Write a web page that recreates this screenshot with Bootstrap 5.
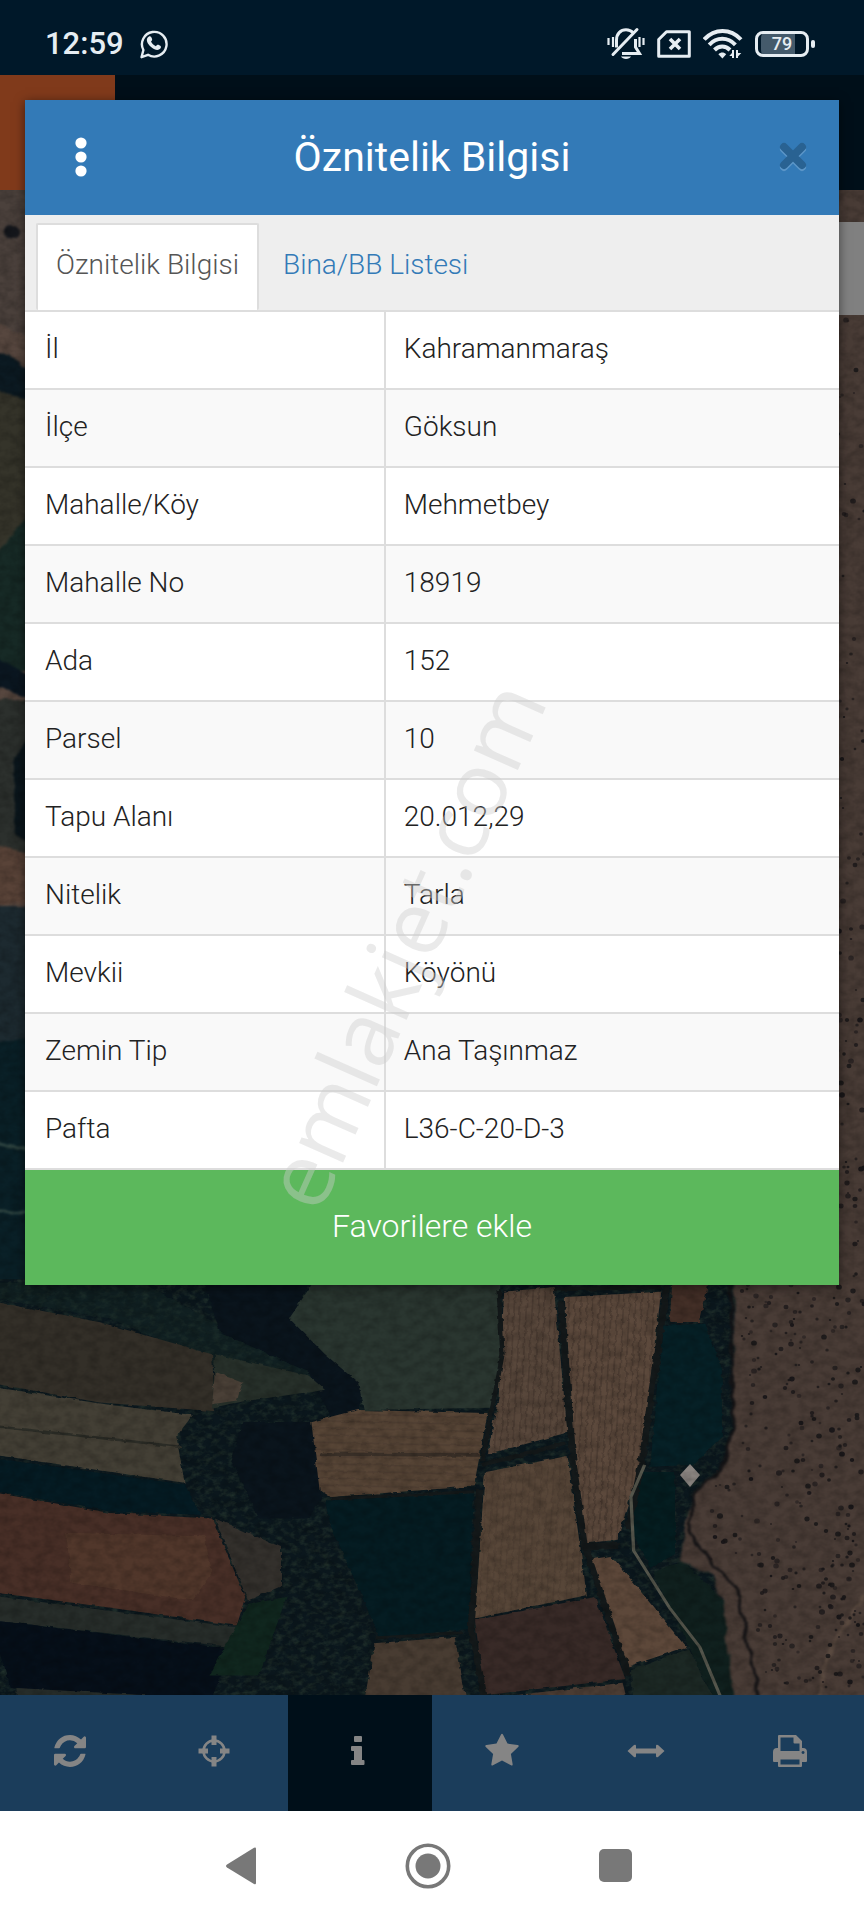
<!DOCTYPE html>
<html lang="tr">
<head>
<meta charset="utf-8">
<meta name="viewport" content="width=device-width, initial-scale=1">
<title>Öznitelik Bilgisi</title>
<link href="https://cdn.jsdelivr.net/npm/bootstrap@5.3.0/dist/css/bootstrap.min.css" rel="stylesheet">
<style>
  body { font-family: Roboto, "Noto Sans", sans-serif; font-weight: 300; color: #222; }
  button { font-family: inherit; }
  .status-bar { height: 75px; padding: 12px 55px 0 45px; background: #001829; color: #e6edf2; }
  .clock { font-size: 31px; line-height: 40px; font-weight: 500; }
  .status-icons { gap: 12px; }
  .battery { width: 54px; height: 26px; border: 3px solid #e6edf2; border-radius: 8px; position: relative; font-size: 18px; line-height: 20px; font-weight: 500;
    background: linear-gradient(90deg, #445a6b 80%, transparent 80%) content-box; padding: 0 3px; }
  .battery::after { content: ""; position: absolute; right: -9px; top: 6px; width: 4px; height: 8px; border-radius: 2px; background: #e6edf2; }
  .app-bar { height: 115px; background: #000f19; }
  .app-logo { width: 115px; background: #803a1b; }
  .map-area { background: #57473f; overflow: hidden; }
  .map-control { width: 60px; height: 93px; margin-top: 32px; background: #808080; }
  .tool-bar { background: #1b3d5b; }
  .tool-bar button { flex: 1 1 0; height: 116px; border: 0; background: none; color: #858585; padding: 0 4px 4px 0; }
  .tool-bar button.active { background: #000f19; }
  .system-nav { height: 109px; padding-right: 8px; background: #fff; }
  .system-nav button { width: 187px; border: 0; background: none; color: #787878; padding: 0; }
  .info-dialog { top: 100px; left: 25px; right: 25px; box-shadow: 0 2px 10px rgba(0,0,0,.5); background: #fff; }
  .dialog-head { height: 115px; padding: 0 32px 2px 42px; background: #337ab7; color: #fff; }
  .dialog-head button { border: 0; background: none; padding: 0; width: 28px; line-height: 0; }
  .dialog-head h1 { font-size: 41px; line-height: 48px; font-weight: 400; padding-right: 10px; }
  .info-tabs { background: #eee; padding: 8px 11px 0; border-bottom: 2px solid #ddd; flex-wrap: nowrap; }
  .info-tabs .nav-link { font-size: 28px; line-height: 40px; padding: 20px 18px 25px; border: 2px solid transparent; border-bottom: 0; border-radius: 2px; color: #337ab7; margin: 0; }
  .info-tabs .nav-item + .nav-item { margin-left: 4px; }
  .info-tabs .nav-link.active { color: #555; background: #fff; border-color: #ddd; }
  .info-table { font-size: 28px; line-height: 40px; border-color: #ddd; color: #222; table-layout: fixed; }
  .info-table th, .info-table td { font-weight: 300; padding: 17px 18px 19px; border-width: 0 0 2px; color: #222; }
  .info-table th { width: 44.2%; border-right: 2px solid #ddd; padding-left: 20px; }
  .info-table tr:nth-child(even) > * { background: #f9f9f9; }
  .favorite { height: 115px; border: 0; background: #5cb85c; color: #fff; font-size: 32px; line-height: 40px; font-weight: 300; padding-bottom: 4px; }
  .watermark { left: 377px; top: 844px; font: 400 90px/100px "Open Sans", sans-serif; color: rgba(205,205,205,.42); white-space: nowrap;
    transform: translate(-50%, -50%) rotate(-66deg); pointer-events: none; }
</style>
</head>
<body>
<div class="position-relative min-vh-100 d-flex flex-column">
  <header class="status-bar d-flex align-items-center">
    <span class="clock">12:59</span>
    <svg class="ms-3" width="28" height="30" viewBox="0 0 28 30" fill="none" stroke="#e6edf2" stroke-width="2.4" aria-hidden="true">
      <path d="M1.5 28.2l1.9-7.2A12.3 12.3 0 1 1 8 25.8Z" stroke-linejoin="round"/>
      <path d="M8.6 7.7c1.5-1 2.6-.3 3.2 1.5.6 1.600.5 2-.8 3.300 1 2.100 2.600 3.700 4.900 4.700 1.400-1.500 1.900-1.700 3.400-.9 1.700.9 2 1.300 1.500 2.500-1 2.200-3.700 2.700-6.300 1.500C10.600 18.400 7.500 15 6.900 11.800 6.600 9.900 7.300 8.600 8.600 7.700Z" fill="#e6edf2" stroke="none"/>
    </svg>
    <div class="status-icons d-flex align-items-center ms-auto">
    <svg width="38" height="34" viewBox="0 0 38 34" fill="none" stroke="#e6edf2" aria-hidden="true">
      <path d="M9.500 20.500V13c0-6 4-10.200 9.500-10.200 3 0 5.500 1.100 7.200 3M28.500 12v8l4 6.500H15" stroke-width="3"/>
      <path d="M30 2.500L6 27.500" stroke-width="3" stroke-linecap="round"/>
      <path d="M14 29.500h10c-1.500 3.300-8.500 3.300-10 0Z" fill="#e6edf2" stroke="none"/>
      <path d="M1.500 11v7M6 10v10M32.500 10v10M36.500 11v7" stroke-width="2.200"/>
    </svg>
    <svg width="34" height="28" viewBox="0 0 34 28" fill="none" stroke="#e6edf2" stroke-width="3" stroke-linejoin="round" aria-hidden="true">
      <path d="M9.500 1.700H32.300V26.300H1.700V9.500Z"/><path d="M13 9l10 10M23 9L13 19" stroke-width="3.600"/>
    </svg>
    <svg width="40" height="30" viewBox="0 0 40 30" fill="none" stroke="#e6edf2" stroke-width="4" aria-hidden="true">
      <path d="M1.200 10.500C11.500-.8 27.500-.8 38 10.500M6.200 15.800c7.500-8 18.500-8 26.200 0M11.500 21c4.500-4.600 11-4.600 15.500 0"/>
      <path d="M19.400 29.500l-4-4.300c2.200-2.200 5.600-2.200 7.800 0Z" fill="#e6edf2" stroke="none"/>
      <path d="M30.300 28.500v-6l-4 4.500h4M34 21v7.500l4.300-4.500H34" fill="#e6edf2" stroke="none"/><path d="M30 21v8M34 21v8" stroke-width="2"/>
    </svg>
    <div class="battery text-center">79</div>
    </div>
  </header>
  <div class="app-bar d-flex"><div class="app-logo"></div></div>

  <main class="map-area position-relative flex-grow-1 d-flex">
    <svg class="position-absolute top-0 start-0 w-100 h-100" viewBox="0 190 864 1505" preserveAspectRatio="none" aria-hidden="true">
      <defs>
        <pattern id="furrowV" width="11" height="40" patternUnits="userSpaceOnUse" patternTransform="rotate(2)"><path d="M3 0V40" stroke="#3d2f28" stroke-opacity=".45" stroke-width="3"/></pattern>
        <pattern id="furrowH" width="40" height="20" patternUnits="userSpaceOnUse" patternTransform="rotate(2)"><path d="M0 6H40" stroke="#3d2f28" stroke-opacity=".3" stroke-width="5"/></pattern>
        <filter id="grain" x="0" y="0" width="100%" height="100%"><feTurbulence type="fractalNoise" baseFrequency=".09 .12" numOctaves="3" seed="5"/><feColorMatrix values="0 0 0 0 0  0 0 0 0 0  0 0 0 0 0  1.500 0 0 0 -.5"/></filter>
        <filter id="leaves" x="0" y="0" width="100%" height="100%" color-interpolation-filters="sRGB"><feTurbulence type="fractalNoise" baseFrequency=".07" numOctaves="3" seed="9"/><feColorMatrix values="0 0 0 0 .13  0 0 0 0 .19  0 0 0 0 .17  2.200 0 0 0 -.950" result="n"/><feComposite in="n" in2="SourceGraphic" operator="in" result="m"/><feMerge><feMergeNode in="SourceGraphic"/><feMergeNode in="m"/></feMerge></filter>
        <filter id="rough" x="-5%" y="-5%" width="110%" height="110%" color-interpolation-filters="sRGB"><feTurbulence type="fractalNoise" baseFrequency=".06" numOctaves="2" seed="2"/><feDisplacementMap in="SourceGraphic" scale="9" xChannelSelector="R" yChannelSelector="G" result="d"/><feGaussianBlur in="d" stdDeviation=".8"/></filter>
      </defs>
      <!-- west edge strip -->
      <g filter="url(#rough)">
        <path fill="#4b413c" d="M-9 180H40V345L-9 320Z"/><circle cx="13" cy="232" r="7" fill="#15171c"/>
        <path fill="#0c1a22" d="M-9 350L40 375V405L-9 390Z"/>
        <path fill="#35342a" d="M-9 390L40 402V520L-9 560Z"/>
        <path fill="#172a26" d="M-9 560L40 500V670H-9Z"/>
        <path fill="#0b1721" d="M-9 655L40 680V700L-9 685Z"/>
        <path fill="#2c302d" d="M-9 700H40V860H-9Z"/><path fill="#0b161c" d="M14 760L40 720V850L14 835Z"/>
        <path fill="#594338" d="M-9 845L40 855V900L-9 905Z"/>
        <path fill="#1d2a30" d="M-9 905H40V1045H-9Z"/><path fill="#0a2027" d="M-9 1040H40V1300H-9Z"/>
        <path d="M-9 1140L40 1155M-9 1210L40 1215" stroke="#304541" stroke-width="3"/>
      </g>
      <!-- fields south of the village, drawn on their own grid -->
      <g transform="translate(0 1140) scale(.551 .357)">
        <path fill="#0b171d" d="M0 390H1340V1568H0Z" filter="url(#leaves)"/>
        <g filter="url(#rough)">
        <path fill="#152826" d="M-20 400H260L400 520L560 640L600 700L380 620L200 500L-20 440Z" fill-opacity=".5"/>
        <path fill="#0a141c" d="M370 400H560L530 500L600 600L660 680L650 760L600 780L560 650L400 540Z"/>
        <path fill="#332f28" d="M-20 450L180 510L385 600L390 760L180 735L-20 680Z"/>
        <path fill="#27302a" d="M390 600L560 660L590 700L450 730L385 750Z"/><path fill="#4a4037" d="M390 650L440 680L430 730L385 740Z"/>
        <path fill="#433f35" d="M-20 690L190 740L350 770L320 830L335 960L-20 880Z"/>
        <path d="M-20 800L330 860" stroke="#2b2c26" stroke-width="7"/>
        <path fill="#051b23" d="M-20 890L335 965L365 1050L200 1040L-20 980Z"/>
        <path fill="#0a141c" d="M440 790L565 790L585 1000L560 1060L470 1060L420 900Z"/>
        <path fill="#482f27" d="M-20 985L200 1045L385 1060L445 1280L430 1360L200 1310L-20 1265Z"/>
        <path fill="#5a402f" fill-opacity=".5" d="M120 1100L370 1110L385 1210L350 1290L130 1240Z"/>
        <path fill="#272d2a" d="M-20 1275L430 1365L420 1420L-20 1345Z"/>
        <path fill="#060f19" d="M-20 1345L420 1425L380 1580H340L20 1535Z"/>
        <path fill="#33302c" d="M390 1060L510 1140L510 1250L450 1290Z"/>
        <path fill="#10261e" d="M450 1300L520 1280L470 1500L380 1500Z"/>
        <path fill="#262c29" d="M30 1535L350 1562V1580H30Z"/>
        <path fill="#2a3630" d="M570 395H905L915 600L890 750L660 756L650 680L590 600L525 500Z"/>
        <path fill="#574536" d="M565 790L650 756L885 765L860 970L600 1000L580 980Z"/><path fill="url(#furrowH)" d="M565 790L650 756L885 765L860 970L600 1000L580 980Z"/>
        <path d="M580 880L870 882" stroke="#392f27" stroke-width="10"/>
        <path fill="#051c22" d="M590 1010L860 990L850 1370L690 1395L600 1080Z"/>
        <path fill="#483c32" d="M680 1410L825 1392L848 1580H660Z"/>
        <path fill="#58473b" d="M915 425L1005 412L1030 820L885 880L905 720Z"/><path fill="url(#furrowV)" d="M915 425L1005 412L1030 820L885 880L905 720Z"/>
        <path fill="#5c493c" d="M1025 440L1200 425L1160 920L1120 1120L1060 1130L1040 800Z"/><path fill="url(#furrowV)" d="M1025 440L1200 425L1160 920L1120 1120L1060 1130L1040 800Z"/>
        <path fill="#574638" d="M880 930L1030 885L1065 1275L862 1340Z"/><path fill="url(#furrowV)" opacity=".5" d="M880 930L1030 885L1065 1275L862 1340Z"/>
        <path fill="#382a27" d="M862 1345L1080 1280L1135 1510L880 1555Z"/><path fill="#4b3c33" d="M880 1565L1130 1520L1140 1580Z"/>
        <path fill="#5d483a" d="M1070 1175L1110 1165L1245 1420L1140 1475Z"/>
        <path fill="#1c2824" d="M1145 1485L1250 1425L1300 1580H1150Z"/>
        <path fill="#432f27" d="M1220 405H1285L1270 510L1215 510Z"/>
        <path fill="#062026" d="M1205 520L1280 515L1310 640L1310 830L1260 910L1180 915Z"/>
        <path fill="#051d20" d="M1160 930L1225 930L1225 1160L1180 1200L1145 1090Z"/>
        <path fill="#10201e" d="M1185 1210L1240 1180L1340 1330L1350 1580H1300Z"/>
        </g>
        <g fill="none" stroke="#14191a" stroke-width="8" filter="url(#rough)">
          <path d="M1018 450L1040 900L1060 1130L1140 1500M875 910L1025 850" stroke-width="12"/><path d="M1060 1140L1125 1135" stroke-width="20"/>
          <path d="M870 980L855 1370L880 1568" stroke-width="12"/><path d="M905 420L912 600L875 900M600 1005L860 985M680 1395L840 1380"/><path d="M1005 418L1200 412M1210 410L1165 900L1140 1090" stroke-width="12"/>
        </g>
        <path fill="none" stroke="#55564c" stroke-width="6" stroke-linejoin="round" d="M1170 910L1145 1000L1150 1150L1215 1310L1270 1420L1310 1568"/>
      </g>
      <!-- scrubland on the east side -->
      <g filter="url(#rough)">
        <path fill="#493c36" d="M735 1280L733 1430L720 1470L692 1495L680 1560L712 1575L722 1600L735 1705H880V180H835V1280Z"/>
        <path fill="none" stroke="#151416" stroke-width="3" d="M731 1285L733 1430L720 1470L692 1495L691 1535L712 1565L738 1590L760 1705"/>
        <path fill="none" stroke="#5a4a40" stroke-width="3" d="M870 1590L835 1640L815 1705"/>
      </g>
      <path fill="#8a8480" d="M680 1475L690 1464L700 1475L690 1487Z"/>
      <g id="shrubs" fill="#1b181a"></g>
      <rect x="0" y="190" width="864" height="1505" filter="url(#grain)" opacity=".25"/>
    </svg>
    <div class="map-control position-relative ms-auto"></div>
  </main>

  <nav class="tool-bar d-flex" aria-label="Harita araçları">
    <button type="button" aria-label="Yenile"><svg width="32" height="32" viewBox="0 0 1536 1536" fill="currentColor"><path d="M1511 928q0 5-1 7-64 268-268 434.500t-478 166.500q-146 0-282.500-55t-243.500-157l-129 129q-19 19-45 19t-45-19-19-45v-448q0-26 19-45t45-19h448q26 0 45 19t19 45-19 45l-137 137q71 66 161 102t187 36q134 0 250-65t186-179q11-17 53-117 8-23 30-23h192q13 0 22.500 9.500t9.500 22.500zm25-800v448q0 26-19 45t-45 19h-448q-26 0-45-19t-19-45 19-45l138-138q-148-137-349-137-134 0-250 65t-186 179q-11 17-53 117-8 23-30 23h-199q-13 0-22.500-9.500t-9.500-22.500v-7q65-268 270-434.500t480-166.500q146 0 284 55.500t245 156.500l130-129q19-19 45-19t45 19 19 45z"/></svg></button>
    <button type="button" aria-label="Konum"><svg width="32" height="32" viewBox="0 0 32 32" fill="none" stroke="currentColor"><circle cx="16" cy="16" r="10.500" stroke-width="2.600"/><path d="M16 .5v9.500M16 22v9.500M.5 16H10M22 16h9.500" stroke-width="5"/></svg></button>
    <button type="button" class="active" aria-label="Bilgi"><svg width="32" height="32" viewBox="0 0 32 32" fill="currentColor"><rect x="12" y="1" width="8" height="6" rx="1"/><path d="M10 11h9a1 1 0 0 1 1 1v13h1.500a1 1 0 0 1 1 1v3a1 1 0 0 1-1 1H10a1 1 0 0 1-1-1v-3a1 1 0 0 1 1-1h2v-9h-2a1 1 0 0 1-1-1v-3a1 1 0 0 1 1-1Z"/></svg></button>
    <button type="button" aria-label="Favoriler"><svg width="36" height="36" viewBox="0 0 1792 1792" fill="currentColor"><path d="M1728 647q0 22-26 48l-363 354 86 500q1 7 1 20 0 21-10.500 35.500t-30.500 14.500q-19 0-40-12l-449-236-449 236q-22 12-40 12-21 0-31.500-14.500t-10.500-35.500q0-6 2-20l86-500-364-354q-25-27-25-48 0-37 56-46l502-73 225-455q19-41 49-41t49 41l225 455 502 73q56 9 56 46z"/></svg></button>
    <button type="button" aria-label="Ölçüm"><svg width="38" height="32" viewBox="0 0 38 32" fill="currentColor"><path d="M.5 16L7 10q2-1 2 1v2.500h20V11q0-2 2-1l6.500 6-6.500 6q-2 1-2-1v-2.500H9V21q0 2-2 1Z"/></svg></button>
    <button type="button" aria-label="Yazdır"><svg width="36" height="32" viewBox="0 0 36 32"><path fill="currentColor" fill-rule="evenodd" d="M7 0H24L30 6V13h1a4 4 0 0 1 4 4v9a1 1 0 0 1-1 1h-4v4a1 1 0 0 1-1 1H7a1 1 0 0 1-1-1v-4H2a1 1 0 0 1-1-1v-9a4 4 0 0 1 4-4h1V1a1 1 0 0 1 1-1ZM8.500 2.500V16h19V8.500h-5a1 1 0 0 1-1-1v-5ZM8.500 24.500v5h19v-5ZM31 16a1.500 1.500 0 1 0 .1 0Z"/></svg></button>
  </nav>

  <nav class="system-nav d-flex justify-content-center" aria-label="Sistem">
    <button type="button" aria-label="Geri"><svg width="32" height="38" viewBox="0 0 32 38"><path fill="currentColor" d="M2 17.500L29 .8q2-1 2 1V36q0 2-2 1L2 20.500q-2-1.500 0-3Z"/></svg></button>
    <button type="button" aria-label="Ana ekran"><svg width="46" height="46" viewBox="0 0 46 46"><circle cx="23" cy="23" r="20.700" fill="none" stroke="currentColor" stroke-width="3.600"/><circle cx="23" cy="23" r="12.500" fill="currentColor"/></svg></button>
    <button type="button" aria-label="Son uygulamalar"><svg width="33" height="33" viewBox="0 0 33 33"><rect width="33" height="33" rx="5" fill="currentColor"/></svg></button>
  </nav>

  <section class="info-dialog position-absolute" role="dialog" aria-labelledby="dialogTitle">
    <div class="dialog-head d-flex align-items-center justify-content-between">
      <button type="button" aria-label="Menü"><svg width="12" height="40" viewBox="0 0 12 40" fill="#fff"><circle cx="6" cy="6" r="5.600"/><circle cx="6" cy="20" r="5.600"/><circle cx="6" cy="34" r="5.600"/></svg></button>
      <h1 id="dialogTitle" class="m-0">Öznitelik Bilgisi</h1>
      <button type="button" aria-label="Kapat"><svg width="28" height="30" viewBox="0 0 28 30" fill="none" stroke-width="8" stroke-linecap="round"><path d="M5 7l18 18M23 7L5 25" stroke="#5c96c8"/><path d="M5 5l18 18M23 5L5 23" stroke="#296292"/></svg></button>
    </div>
    <ul class="nav nav-tabs info-tabs" role="tablist">
      <li class="nav-item" role="presentation"><button class="nav-link active" type="button" role="tab" aria-selected="true">Öznitelik Bilgisi</button></li>
      <li class="nav-item" role="presentation"><button class="nav-link" type="button" role="tab" aria-selected="false">Bina/BB Listesi</button></li>
    </ul>
    <table class="table info-table m-0">
      <tbody>
        <tr><th scope="row">İl</th><td>Kahramanmaraş</td></tr>
        <tr><th scope="row">İlçe</th><td>Göksun</td></tr>
        <tr><th scope="row">Mahalle/Köy</th><td>Mehmetbey</td></tr>
        <tr><th scope="row">Mahalle No</th><td>18919</td></tr>
        <tr><th scope="row">Ada</th><td>152</td></tr>
        <tr><th scope="row">Parsel</th><td>10</td></tr>
        <tr><th scope="row">Tapu Alanı</th><td>20.012,29</td></tr>
        <tr><th scope="row">Nitelik</th><td>Tarla</td></tr>
        <tr><th scope="row">Mevkii</th><td>Köyönü</td></tr>
        <tr><th scope="row">Zemin Tip</th><td>Ana Taşınmaz</td></tr>
        <tr><th scope="row">Pafta</th><td>L36-C-20-D-3</td></tr>
      </tbody>
    </table>
    <button type="button" class="favorite d-block w-100">Favorilere ekle</button>
    <div class="watermark position-absolute">emlakjet.com</div>
  </section>
</div>
<script src="https://cdn.jsdelivr.net/npm/bootstrap@5.3.0/dist/js/bootstrap.bundle.min.js"></script>
<script>
  // scatter shrubs over the scrubland with a fixed seed
  let seed = 7;
  const rnd = () => (seed = (seed * 16807) % 2147483647) / 2147483647;
  let marks = '';
  for (let i = 0; i < 360; i++) {
    const strip = i < 80;
    const y = strip ? 320 + rnd() * 960 : 1285 + rnd() * 405;
    const left = strip ? 838 : y < 1470 ? 742 : y < 1560 ? 710 : 758;
    const r = 1 + rnd() * 2;
    marks += `<ellipse cx="${(left + rnd() * (864 - left)).toFixed()}" cy="${y.toFixed()}" rx="${r.toFixed(1)}" ry="${(r * .9).toFixed(1)}" opacity="${(.5 + rnd() * .5).toFixed(1)}"/>`;
  }
  document.getElementById('shrubs').innerHTML = marks;
</script>
</body>
</html>
